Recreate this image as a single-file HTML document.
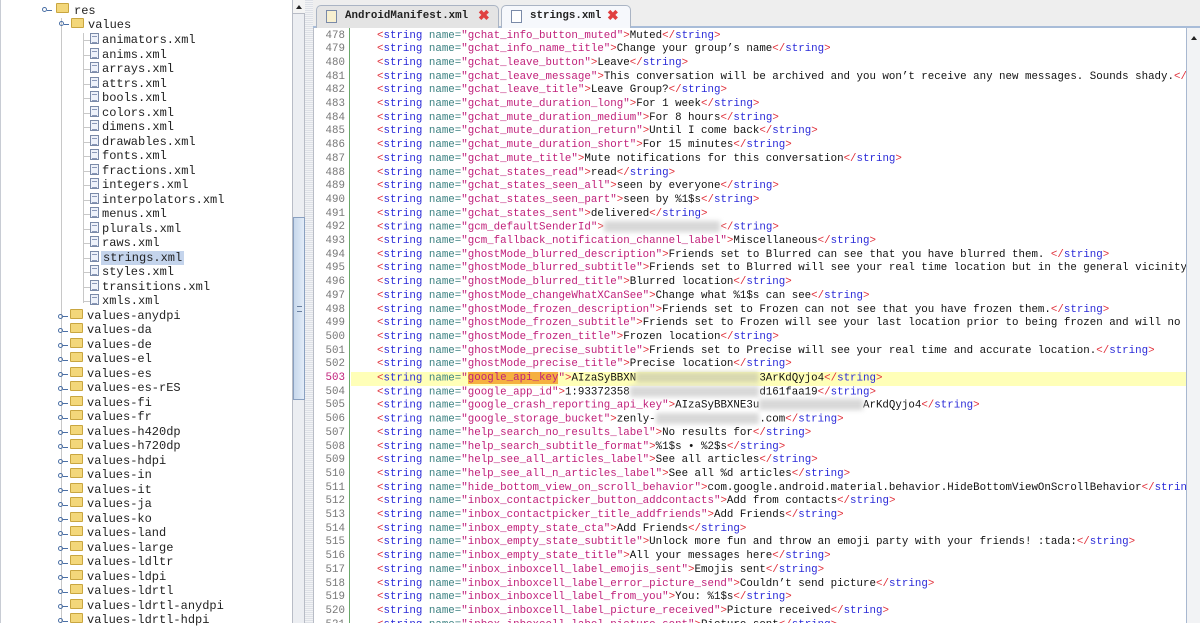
<!DOCTYPE html>
<html><head><meta charset="utf-8">
<style>
*{margin:0;padding:0;box-sizing:border-box}
body{width:1200px;height:623px;overflow:hidden;background:#fff;font-family:"Liberation Mono",monospace;position:relative}
#tree{position:absolute;left:0;top:0;width:292px;height:623px;background:#fff;border-left:1px solid #c8ccd4;overflow:hidden}
.t{position:absolute;height:14.5px;line-height:14.5px;font-size:12px;color:#222;white-space:nowrap}
.fi{position:absolute;width:9px;height:11px;border:1px solid #7a8aa8;background:#eef2fa;top:2px}
.fi:after{content:"";position:absolute;left:1px;top:2px;width:5px;height:5px;border-top:1px solid #8a98b8;border-bottom:1px solid #8a98b8}
.fo{position:absolute;width:13px;height:10px;background:#f3d77a;border:1px solid #c9a640;top:3px;border-radius:1px}
.ex{position:absolute;top:5px;width:5px;height:5px;border:1px solid #4a6fa5;border-radius:50%}
.ex:after{content:"";position:absolute;left:4px;top:1.5px;width:5px;height:1px;background:#4a6fa5}
.vl{position:absolute;width:1px;background:#c8c8c8}
.hl{position:absolute;height:1px;width:8px;background:#c8c8c8}
#sb{position:absolute;left:292px;top:0;width:13px;height:623px;background:#eceef2;border-left:1px solid #b8bcc6;border-right:1px solid #b8bcc6}
#sb .up{position:absolute;left:0;top:0;width:12px;height:14px;background:#f4f4f4;border-bottom:1px solid #b8bcc6}
#sb .up:after{content:"";position:absolute;left:3px;top:5px;border-left:3px solid transparent;border-right:3px solid transparent;border-bottom:4px solid #222}
#sb .th{position:absolute;left:0;top:217px;width:12px;height:183px;background:linear-gradient(90deg,#c8d8ec,#e2ecf8);border:1px solid #8aa0c0}
#sb .th:after{content:"";position:absolute;left:3px;top:88px;width:5px;height:4px;border-top:1px solid #6a80a0;border-bottom:1px solid #6a80a0}
#div{position:absolute;left:305px;top:0;width:8px;height:623px;background:repeating-linear-gradient(0deg,#dde0e6 0 1px,#f2f3f5 1px 2px)}
#tabs{position:absolute;left:313px;top:0;width:887px;height:28px;background:#eeeeee;border-bottom:2px solid #a8bcd8}
.tab{position:absolute;top:5px;height:23px;border:1px solid #aab4c4;border-bottom:none;border-radius:5px 5px 0 0;font-size:10.8px;font-weight:bold;line-height:21px;color:#222;padding-left:28px}
.tab .ic{position:absolute;left:9px;top:4px;width:11px;height:13px;border:1px solid #7a8aa8;background:#fff}
.tab .x{position:absolute;top:1px;color:#e04040;font-size:14px;font-weight:bold}
#ed{position:absolute;left:313px;top:28px;width:873px;height:595px;background:#fff;overflow:hidden;border-left:1px solid #b8bcc6}
#gut{position:absolute;left:0;top:0;width:36px;height:595px;border-right:1px solid #6aa86a;background:#fff}
.n{position:absolute;right:4px;font-size:10.8px;color:#777;height:13.7px;line-height:13.7px}
.l{position:absolute;left:64px;font-size:10.8px;height:13.7px;line-height:13.7px;white-space:pre;color:#111}
.l u{text-decoration:none;color:#e0303a}
.l b{font-weight:normal;color:#2a2ad8}
.l s{text-decoration:none;color:#3a8080}
.l em{font-style:normal;color:#c0207a}
.bl{display:inline-block;background:#d8d8d8;filter:blur(2.5px);height:11px;vertical-align:middle}
#hlrow{position:absolute;left:37px;width:836px;top:344px;height:13.7px;background:#ffffb8}
#rsb{position:absolute;left:1186px;top:28px;width:14px;height:595px;background:#f2f3f5;border-left:1px solid #a8b8d0}
#rsb:after{content:"";position:absolute;left:4px;top:8px;border-left:3px solid transparent;border-right:3px solid transparent;border-bottom:4px solid #222}
</style></head><body>
<div id="tree">
<div class="vl" style="left:60px;top:18px;height:605px"></div>
<div class="vl" style="left:82px;top:33px;height:270px"></div>
<div class="ex" style="left:41px;top:7px"></div><div class="fo" style="left:55px;top:3px"></div><div class="t" style="left:73px;top:4px">res</div>
<div class="ex" style="left:58px;top:21px"></div><div class="fo" style="left:70px;top:18px"></div><div class="t" style="left:87px;top:18px">values</div>
</div>
<div id="sb"><div class="up"></div><div class="th"></div></div>
<div id="div"></div>
<div id="tabs">
<div class="tab" style="left:3px;width:183px;background:#e4e4e4"><span class="ic" style="background:#f8f0d0"></span>AndroidManifest.xml<span class="x" style="left:161px">✖</span></div>
<div class="tab" style="left:188px;width:130px;background:#f6f8fc"><span class="ic"></span>strings.xml<span class="x" style="left:105px">✖</span></div>
</div>
<div id="ed">
<div id="hlrow"></div>
<div id="gut"></div>
</div>
<div id="rsb"></div>
<div style="position:absolute;left:0;top:0">
<div class="hl" style="left:83px;top:40px"></div><div class="fi" style="left:90px;top:33px"></div><div class="t" style="left:102px;top:33px">animators.xml</div>
<div class="hl" style="left:83px;top:55px"></div><div class="fi" style="left:90px;top:47.5px"></div><div class="t" style="left:102px;top:47.5px">anims.xml</div>
<div class="hl" style="left:83px;top:69px"></div><div class="fi" style="left:90px;top:62px"></div><div class="t" style="left:102px;top:62px">arrays.xml</div>
<div class="hl" style="left:83px;top:84px"></div><div class="fi" style="left:90px;top:76.5px"></div><div class="t" style="left:102px;top:76.5px">attrs.xml</div>
<div class="hl" style="left:83px;top:98px"></div><div class="fi" style="left:90px;top:91px"></div><div class="t" style="left:102px;top:91px">bools.xml</div>
<div class="hl" style="left:83px;top:113px"></div><div class="fi" style="left:90px;top:105.5px"></div><div class="t" style="left:102px;top:105.5px">colors.xml</div>
<div class="hl" style="left:83px;top:127px"></div><div class="fi" style="left:90px;top:120px"></div><div class="t" style="left:102px;top:120px">dimens.xml</div>
<div class="hl" style="left:83px;top:142px"></div><div class="fi" style="left:90px;top:134.5px"></div><div class="t" style="left:102px;top:134.5px">drawables.xml</div>
<div class="hl" style="left:83px;top:156px"></div><div class="fi" style="left:90px;top:149px"></div><div class="t" style="left:102px;top:149px">fonts.xml</div>
<div class="hl" style="left:83px;top:171px"></div><div class="fi" style="left:90px;top:163.5px"></div><div class="t" style="left:102px;top:163.5px">fractions.xml</div>
<div class="hl" style="left:83px;top:185px"></div><div class="fi" style="left:90px;top:178px"></div><div class="t" style="left:102px;top:178px">integers.xml</div>
<div class="hl" style="left:83px;top:200px"></div><div class="fi" style="left:90px;top:192.5px"></div><div class="t" style="left:102px;top:192.5px">interpolators.xml</div>
<div class="hl" style="left:83px;top:214px"></div><div class="fi" style="left:90px;top:207px"></div><div class="t" style="left:102px;top:207px">menus.xml</div>
<div class="hl" style="left:83px;top:229px"></div><div class="fi" style="left:90px;top:221.5px"></div><div class="t" style="left:102px;top:221.5px">plurals.xml</div>
<div class="hl" style="left:83px;top:243px"></div><div class="fi" style="left:90px;top:236px"></div><div class="t" style="left:102px;top:236px">raws.xml</div>
<div class="hl" style="left:83px;top:258px"></div><div class="fi" style="left:90px;top:250.5px"></div><div class="t" style="left:101px;top:250.5px;background:#c4d4ec;padding:0 2px">strings.xml</div>
<div class="hl" style="left:83px;top:272px"></div><div class="fi" style="left:90px;top:265px"></div><div class="t" style="left:102px;top:265px">styles.xml</div>
<div class="hl" style="left:83px;top:287px"></div><div class="fi" style="left:90px;top:279.5px"></div><div class="t" style="left:102px;top:279.5px">transitions.xml</div>
<div class="hl" style="left:83px;top:301px"></div><div class="fi" style="left:90px;top:294px"></div><div class="t" style="left:102px;top:294px">xmls.xml</div>
<div class="ex" style="left:58px;top:313.5px"></div><div class="fo" style="left:70px;top:308.5px"></div><div class="t" style="left:87px;top:308.5px">values-anydpi</div>
<div class="ex" style="left:58px;top:328px"></div><div class="fo" style="left:70px;top:323px"></div><div class="t" style="left:87px;top:323px">values-da</div>
<div class="ex" style="left:58px;top:342.5px"></div><div class="fo" style="left:70px;top:337.5px"></div><div class="t" style="left:87px;top:337.5px">values-de</div>
<div class="ex" style="left:58px;top:357px"></div><div class="fo" style="left:70px;top:352px"></div><div class="t" style="left:87px;top:352px">values-el</div>
<div class="ex" style="left:58px;top:371.5px"></div><div class="fo" style="left:70px;top:366.5px"></div><div class="t" style="left:87px;top:366.5px">values-es</div>
<div class="ex" style="left:58px;top:386px"></div><div class="fo" style="left:70px;top:381px"></div><div class="t" style="left:87px;top:381px">values-es-rES</div>
<div class="ex" style="left:58px;top:400.5px"></div><div class="fo" style="left:70px;top:395.5px"></div><div class="t" style="left:87px;top:395.5px">values-fi</div>
<div class="ex" style="left:58px;top:415px"></div><div class="fo" style="left:70px;top:410px"></div><div class="t" style="left:87px;top:410px">values-fr</div>
<div class="ex" style="left:58px;top:429.5px"></div><div class="fo" style="left:70px;top:424.5px"></div><div class="t" style="left:87px;top:424.5px">values-h420dp</div>
<div class="ex" style="left:58px;top:444px"></div><div class="fo" style="left:70px;top:439px"></div><div class="t" style="left:87px;top:439px">values-h720dp</div>
<div class="ex" style="left:58px;top:458.5px"></div><div class="fo" style="left:70px;top:453.5px"></div><div class="t" style="left:87px;top:453.5px">values-hdpi</div>
<div class="ex" style="left:58px;top:473px"></div><div class="fo" style="left:70px;top:468px"></div><div class="t" style="left:87px;top:468px">values-in</div>
<div class="ex" style="left:58px;top:487.5px"></div><div class="fo" style="left:70px;top:482.5px"></div><div class="t" style="left:87px;top:482.5px">values-it</div>
<div class="ex" style="left:58px;top:502px"></div><div class="fo" style="left:70px;top:497px"></div><div class="t" style="left:87px;top:497px">values-ja</div>
<div class="ex" style="left:58px;top:516.5px"></div><div class="fo" style="left:70px;top:511.5px"></div><div class="t" style="left:87px;top:511.5px">values-ko</div>
<div class="ex" style="left:58px;top:531px"></div><div class="fo" style="left:70px;top:526px"></div><div class="t" style="left:87px;top:526px">values-land</div>
<div class="ex" style="left:58px;top:545.5px"></div><div class="fo" style="left:70px;top:540.5px"></div><div class="t" style="left:87px;top:540.5px">values-large</div>
<div class="ex" style="left:58px;top:560px"></div><div class="fo" style="left:70px;top:555px"></div><div class="t" style="left:87px;top:555px">values-ldltr</div>
<div class="ex" style="left:58px;top:574.5px"></div><div class="fo" style="left:70px;top:569.5px"></div><div class="t" style="left:87px;top:569.5px">values-ldpi</div>
<div class="ex" style="left:58px;top:589px"></div><div class="fo" style="left:70px;top:584px"></div><div class="t" style="left:87px;top:584px">values-ldrtl</div>
<div class="ex" style="left:58px;top:603.5px"></div><div class="fo" style="left:70px;top:598.5px"></div><div class="t" style="left:87px;top:598.5px">values-ldrtl-anydpi</div>
<div class="ex" style="left:58px;top:618px"></div><div class="fo" style="left:70px;top:613px"></div><div class="t" style="left:87px;top:613px">values-ldrtl-hdpi</div>
</div>
<div style="position:absolute;left:313px;top:28px;width:873px;height:595px;overflow:hidden">
<div style="position:absolute;left:0;top:2px;width:873px;height:600px">
<div class="n" style="left:0;width:32px;text-align:right;top:0">478</div>
<div class="l" style="top:-0.5px"><u>&lt;</u><b>string</b> <s>name=</s><em>"gchat_info_button_muted"</em><u>&gt;</u>Muted<u>&lt;/</u><b>string</b><u>&gt;</u></div>
<div class="n" style="left:0;width:32px;text-align:right;top:13.2px">479</div>
<div class="l" style="top:13.2px"><u>&lt;</u><b>string</b> <s>name=</s><em>"gchat_info_name_title"</em><u>&gt;</u>Change your group’s name<u>&lt;/</u><b>string</b><u>&gt;</u></div>
<div class="n" style="left:0;width:32px;text-align:right;top:26.9px">480</div>
<div class="l" style="top:26.9px"><u>&lt;</u><b>string</b> <s>name=</s><em>"gchat_leave_button"</em><u>&gt;</u>Leave<u>&lt;/</u><b>string</b><u>&gt;</u></div>
<div class="n" style="left:0;width:32px;text-align:right;top:40.6px">481</div>
<div class="l" style="top:40.6px"><u>&lt;</u><b>string</b> <s>name=</s><em>"gchat_leave_message"</em><u>&gt;</u>This conversation will be archived and you won’t receive any new messages. Sounds shady.<u>&lt;/</u><b>string</b><u>&gt;</u></div>
<div class="n" style="left:0;width:32px;text-align:right;top:54.3px">482</div>
<div class="l" style="top:54.3px"><u>&lt;</u><b>string</b> <s>name=</s><em>"gchat_leave_title"</em><u>&gt;</u>Leave Group?<u>&lt;/</u><b>string</b><u>&gt;</u></div>
<div class="n" style="left:0;width:32px;text-align:right;top:68px">483</div>
<div class="l" style="top:68px"><u>&lt;</u><b>string</b> <s>name=</s><em>"gchat_mute_duration_long"</em><u>&gt;</u>For 1 week<u>&lt;/</u><b>string</b><u>&gt;</u></div>
<div class="n" style="left:0;width:32px;text-align:right;top:81.7px">484</div>
<div class="l" style="top:81.7px"><u>&lt;</u><b>string</b> <s>name=</s><em>"gchat_mute_duration_medium"</em><u>&gt;</u>For 8 hours<u>&lt;/</u><b>string</b><u>&gt;</u></div>
<div class="n" style="left:0;width:32px;text-align:right;top:95.4px">485</div>
<div class="l" style="top:95.4px"><u>&lt;</u><b>string</b> <s>name=</s><em>"gchat_mute_duration_return"</em><u>&gt;</u>Until I come back<u>&lt;/</u><b>string</b><u>&gt;</u></div>
<div class="n" style="left:0;width:32px;text-align:right;top:109.1px">486</div>
<div class="l" style="top:109.1px"><u>&lt;</u><b>string</b> <s>name=</s><em>"gchat_mute_duration_short"</em><u>&gt;</u>For 15 minutes<u>&lt;/</u><b>string</b><u>&gt;</u></div>
<div class="n" style="left:0;width:32px;text-align:right;top:122.8px">487</div>
<div class="l" style="top:122.8px"><u>&lt;</u><b>string</b> <s>name=</s><em>"gchat_mute_title"</em><u>&gt;</u>Mute notifications for this conversation<u>&lt;/</u><b>string</b><u>&gt;</u></div>
<div class="n" style="left:0;width:32px;text-align:right;top:136.5px">488</div>
<div class="l" style="top:136.5px"><u>&lt;</u><b>string</b> <s>name=</s><em>"gchat_states_read"</em><u>&gt;</u>read<u>&lt;/</u><b>string</b><u>&gt;</u></div>
<div class="n" style="left:0;width:32px;text-align:right;top:150.2px">489</div>
<div class="l" style="top:150.2px"><u>&lt;</u><b>string</b> <s>name=</s><em>"gchat_states_seen_all"</em><u>&gt;</u>seen by everyone<u>&lt;/</u><b>string</b><u>&gt;</u></div>
<div class="n" style="left:0;width:32px;text-align:right;top:163.9px">490</div>
<div class="l" style="top:163.9px"><u>&lt;</u><b>string</b> <s>name=</s><em>"gchat_states_seen_part"</em><u>&gt;</u>seen by %1$s<u>&lt;/</u><b>string</b><u>&gt;</u></div>
<div class="n" style="left:0;width:32px;text-align:right;top:177.6px">491</div>
<div class="l" style="top:177.6px"><u>&lt;</u><b>string</b> <s>name=</s><em>"gchat_states_sent"</em><u>&gt;</u>delivered<u>&lt;/</u><b>string</b><u>&gt;</u></div>
<div class="n" style="left:0;width:32px;text-align:right;top:191.3px">492</div>
<div class="l" style="top:191.3px"><u>&lt;</u><b>string</b> <s>name=</s><em>"gcm_defaultSenderId"</em><u>&gt;</u><span class="bl" style="width:18ch"></span><u>&lt;/</u><b>string</b><u>&gt;</u></div>
<div class="n" style="left:0;width:32px;text-align:right;top:205px">493</div>
<div class="l" style="top:205px"><u>&lt;</u><b>string</b> <s>name=</s><em>"gcm_fallback_notification_channel_label"</em><u>&gt;</u>Miscellaneous<u>&lt;/</u><b>string</b><u>&gt;</u></div>
<div class="n" style="left:0;width:32px;text-align:right;top:218.7px">494</div>
<div class="l" style="top:218.7px"><u>&lt;</u><b>string</b> <s>name=</s><em>"ghostMode_blurred_description"</em><u>&gt;</u>Friends set to Blurred can see that you have blurred them. <u>&lt;/</u><b>string</b><u>&gt;</u></div>
<div class="n" style="left:0;width:32px;text-align:right;top:232.4px">495</div>
<div class="l" style="top:232.4px"><u>&lt;</u><b>string</b> <s>name=</s><em>"ghostMode_blurred_subtitle"</em><u>&gt;</u>Friends set to Blurred will see your real time location but in the general vicinity of</div>
<div class="n" style="left:0;width:32px;text-align:right;top:246.1px">496</div>
<div class="l" style="top:246.1px"><u>&lt;</u><b>string</b> <s>name=</s><em>"ghostMode_blurred_title"</em><u>&gt;</u>Blurred location<u>&lt;/</u><b>string</b><u>&gt;</u></div>
<div class="n" style="left:0;width:32px;text-align:right;top:259.8px">497</div>
<div class="l" style="top:259.8px"><u>&lt;</u><b>string</b> <s>name=</s><em>"ghostMode_changeWhatXCanSee"</em><u>&gt;</u>Change what %1$s can see<u>&lt;/</u><b>string</b><u>&gt;</u></div>
<div class="n" style="left:0;width:32px;text-align:right;top:273.5px">498</div>
<div class="l" style="top:273.5px"><u>&lt;</u><b>string</b> <s>name=</s><em>"ghostMode_frozen_description"</em><u>&gt;</u>Friends set to Frozen can not see that you have frozen them.<u>&lt;/</u><b>string</b><u>&gt;</u></div>
<div class="n" style="left:0;width:32px;text-align:right;top:287.2px">499</div>
<div class="l" style="top:287.2px"><u>&lt;</u><b>string</b> <s>name=</s><em>"ghostMode_frozen_subtitle"</em><u>&gt;</u>Friends set to Frozen will see your last location prior to being frozen and will no lo</div>
<div class="n" style="left:0;width:32px;text-align:right;top:300.9px">500</div>
<div class="l" style="top:300.9px"><u>&lt;</u><b>string</b> <s>name=</s><em>"ghostMode_frozen_title"</em><u>&gt;</u>Frozen location<u>&lt;/</u><b>string</b><u>&gt;</u></div>
<div class="n" style="left:0;width:32px;text-align:right;top:314.6px">501</div>
<div class="l" style="top:314.6px"><u>&lt;</u><b>string</b> <s>name=</s><em>"ghostMode_precise_subtitle"</em><u>&gt;</u>Friends set to Precise will see your real time and accurate location.<u>&lt;/</u><b>string</b><u>&gt;</u></div>
<div class="n" style="left:0;width:32px;text-align:right;top:328.3px">502</div>
<div class="l" style="top:328.3px"><u>&lt;</u><b>string</b> <s>name=</s><em>"ghostMode_precise_title"</em><u>&gt;</u>Precise location<u>&lt;/</u><b>string</b><u>&gt;</u></div>
<div class="n" style="left:0;width:32px;text-align:right;top:342px;color:#c0207a">503</div>
<div class="l" style="top:342px"><u>&lt;</u><b>string</b> <s>name=</s><em>"<span style="background:#f5b040">google_api_key</span>"</em><u>&gt;</u>AIzaSyBBXN<span class="bl" style="width:19ch;background:#d8d8b0"></span>3ArKdQyjo4<u>&lt;/</u><b>string</b><u>&gt;</u></div>
<div class="n" style="left:0;width:32px;text-align:right;top:355.7px">504</div>
<div class="l" style="top:355.7px"><u>&lt;</u><b>string</b> <s>name=</s><em>"google_app_id"</em><u>&gt;</u>1:93372358<span class="bl" style="width:20ch"></span>d161faa19<u>&lt;/</u><b>string</b><u>&gt;</u></div>
<div class="n" style="left:0;width:32px;text-align:right;top:369.4px">505</div>
<div class="l" style="top:369.4px"><u>&lt;</u><b>string</b> <s>name=</s><em>"google_crash_reporting_api_key"</em><u>&gt;</u>AIzaSyBBXNE3u<span class="bl" style="width:16ch"></span>ArKdQyjo4<u>&lt;/</u><b>string</b><u>&gt;</u></div>
<div class="n" style="left:0;width:32px;text-align:right;top:383.1px">506</div>
<div class="l" style="top:383.1px"><u>&lt;</u><b>string</b> <s>name=</s><em>"google_storage_bucket"</em><u>&gt;</u>zenly-<span class="bl" style="width:16ch"></span>.com<u>&lt;/</u><b>string</b><u>&gt;</u></div>
<div class="n" style="left:0;width:32px;text-align:right;top:396.8px">507</div>
<div class="l" style="top:396.8px"><u>&lt;</u><b>string</b> <s>name=</s><em>"help_search_no_results_label"</em><u>&gt;</u>No results for<u>&lt;/</u><b>string</b><u>&gt;</u></div>
<div class="n" style="left:0;width:32px;text-align:right;top:410.5px">508</div>
<div class="l" style="top:410.5px"><u>&lt;</u><b>string</b> <s>name=</s><em>"help_search_subtitle_format"</em><u>&gt;</u>%1$s • %2$s<u>&lt;/</u><b>string</b><u>&gt;</u></div>
<div class="n" style="left:0;width:32px;text-align:right;top:424.2px">509</div>
<div class="l" style="top:424.2px"><u>&lt;</u><b>string</b> <s>name=</s><em>"help_see_all_articles_label"</em><u>&gt;</u>See all articles<u>&lt;/</u><b>string</b><u>&gt;</u></div>
<div class="n" style="left:0;width:32px;text-align:right;top:437.9px">510</div>
<div class="l" style="top:437.9px"><u>&lt;</u><b>string</b> <s>name=</s><em>"help_see_all_n_articles_label"</em><u>&gt;</u>See all %d articles<u>&lt;/</u><b>string</b><u>&gt;</u></div>
<div class="n" style="left:0;width:32px;text-align:right;top:451.6px">511</div>
<div class="l" style="top:451.6px"><u>&lt;</u><b>string</b> <s>name=</s><em>"hide_bottom_view_on_scroll_behavior"</em><u>&gt;</u>com.google.android.material.behavior.HideBottomViewOnScrollBehavior<u>&lt;/</u><b>string</b><u>&gt;</u></div>
<div class="n" style="left:0;width:32px;text-align:right;top:465.3px">512</div>
<div class="l" style="top:465.3px"><u>&lt;</u><b>string</b> <s>name=</s><em>"inbox_contactpicker_button_addcontacts"</em><u>&gt;</u>Add from contacts<u>&lt;/</u><b>string</b><u>&gt;</u></div>
<div class="n" style="left:0;width:32px;text-align:right;top:479px">513</div>
<div class="l" style="top:479px"><u>&lt;</u><b>string</b> <s>name=</s><em>"inbox_contactpicker_title_addfriends"</em><u>&gt;</u>Add Friends<u>&lt;/</u><b>string</b><u>&gt;</u></div>
<div class="n" style="left:0;width:32px;text-align:right;top:492.7px">514</div>
<div class="l" style="top:492.7px"><u>&lt;</u><b>string</b> <s>name=</s><em>"inbox_empty_state_cta"</em><u>&gt;</u>Add Friends<u>&lt;/</u><b>string</b><u>&gt;</u></div>
<div class="n" style="left:0;width:32px;text-align:right;top:506.4px">515</div>
<div class="l" style="top:506.4px"><u>&lt;</u><b>string</b> <s>name=</s><em>"inbox_empty_state_subtitle"</em><u>&gt;</u>Unlock more fun and throw an emoji party with your friends! :tada:<u>&lt;/</u><b>string</b><u>&gt;</u></div>
<div class="n" style="left:0;width:32px;text-align:right;top:520.1px">516</div>
<div class="l" style="top:520.1px"><u>&lt;</u><b>string</b> <s>name=</s><em>"inbox_empty_state_title"</em><u>&gt;</u>All your messages here<u>&lt;/</u><b>string</b><u>&gt;</u></div>
<div class="n" style="left:0;width:32px;text-align:right;top:533.8px">517</div>
<div class="l" style="top:533.8px"><u>&lt;</u><b>string</b> <s>name=</s><em>"inbox_inboxcell_label_emojis_sent"</em><u>&gt;</u>Emojis sent<u>&lt;/</u><b>string</b><u>&gt;</u></div>
<div class="n" style="left:0;width:32px;text-align:right;top:547.5px">518</div>
<div class="l" style="top:547.5px"><u>&lt;</u><b>string</b> <s>name=</s><em>"inbox_inboxcell_label_error_picture_send"</em><u>&gt;</u>Couldn’t send picture<u>&lt;/</u><b>string</b><u>&gt;</u></div>
<div class="n" style="left:0;width:32px;text-align:right;top:561.2px">519</div>
<div class="l" style="top:561.2px"><u>&lt;</u><b>string</b> <s>name=</s><em>"inbox_inboxcell_label_from_you"</em><u>&gt;</u>You: %1$s<u>&lt;/</u><b>string</b><u>&gt;</u></div>
<div class="n" style="left:0;width:32px;text-align:right;top:574.9px">520</div>
<div class="l" style="top:574.9px"><u>&lt;</u><b>string</b> <s>name=</s><em>"inbox_inboxcell_label_picture_received"</em><u>&gt;</u>Picture received<u>&lt;/</u><b>string</b><u>&gt;</u></div>
<div class="n" style="left:0;width:32px;text-align:right;top:588.6px">521</div>
<div class="l" style="top:588.6px"><u>&lt;</u><b>string</b> <s>name=</s><em>"inbox_inboxcell_label_picture_sent"</em><u>&gt;</u>Picture sent<u>&lt;/</u><b>string</b><u>&gt;</u></div>
</div>
</div>
</body></html>
